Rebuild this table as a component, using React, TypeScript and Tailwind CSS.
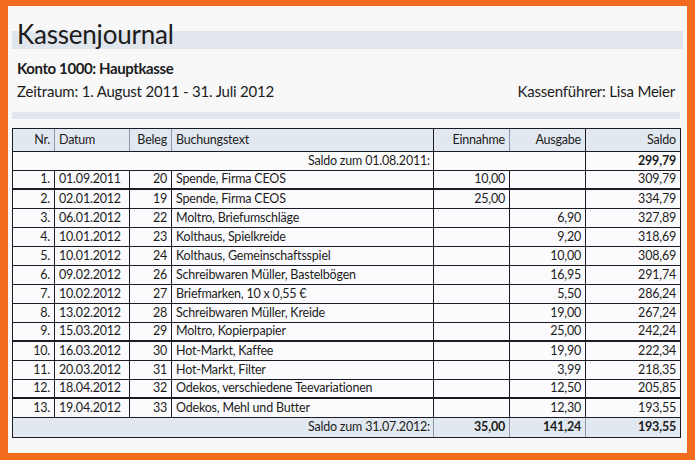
import React from 'react';

type Row = {
    nr: string;
    datum: string;
    beleg: string;
    text: string;
    ein: string;
    aus: string;
    saldo: string;
    thick?: boolean;
};

const rows: Row[] = [
    { nr: '1.', datum: '01.09.2011', beleg: '20', text: 'Spende, Firma CEOS', ein: '10,00', aus: '', saldo: '309,79', thick: true },
    { nr: '2.', datum: '02.01.2012', beleg: '19', text: 'Spende, Firma CEOS', ein: '25,00', aus: '', saldo: '334,79' },
    { nr: '3.', datum: '06.01.2012', beleg: '22', text: 'Moltro, Briefumschläge', ein: '', aus: '6,90', saldo: '327,89' },
    { nr: '4.', datum: '10.01.2012', beleg: '23', text: 'Kolthaus, Spielkreide', ein: '', aus: '9,20', saldo: '318,69' },
    { nr: '5.', datum: '10.01.2012', beleg: '24', text: 'Kolthaus, Gemeinschaftsspiel', ein: '', aus: '10,00', saldo: '308,69' },
    { nr: '6.', datum: '09.02.2012', beleg: '26', text: 'Schreibwaren Müller, Bastelbögen', ein: '', aus: '16,95', saldo: '291,74' },
    { nr: '7.', datum: '10.02.2012', beleg: '27', text: 'Briefmarken, 10 x 0,55 €', ein: '', aus: '5,50', saldo: '286,24' },
    { nr: '8.', datum: '13.02.2012', beleg: '28', text: 'Schreibwaren Müller, Kreide', ein: '', aus: '19,00', saldo: '267,24' },
    { nr: '9.', datum: '15.03.2012', beleg: '29', text: 'Moltro, Kopierpapier', ein: '', aus: '25,00', saldo: '242,24', thick: true },
    { nr: '10.', datum: '16.03.2012', beleg: '30', text: 'Hot-Markt, Kaffee', ein: '', aus: '19,90', saldo: '222,34' },
    { nr: '11.', datum: '20.03.2012', beleg: '31', text: 'Hot-Markt, Filter', ein: '', aus: '3,99', saldo: '218,35' },
    { nr: '12.', datum: '18.04.2012', beleg: '32', text: 'Odekos, verschiedene Teevariationen', ein: '', aus: '12,50', saldo: '205,85', thick: true },
    { nr: '13.', datum: '19.04.2012', beleg: '33', text: 'Odekos, Mehl und Butter', ein: '', aus: '12,30', saldo: '193,55' },
];

const line = 'border-[#1b1b26]';

export default function App() {
    return (
        <div className="w-[695px] h-[460px] bg-[#f26b1f] pt-[6px] pl-[8px] pr-[8px] pb-[7px] font-['Lato','Open_Sans',sans-serif] text-[#1c1c1c]">
            <div className="h-full bg-[#f8f8f8] px-[4px] pt-[12px]">
                {/* title with grey band behind it */}
                <div className="w-[671px] h-[32px] pl-[5px] text-[26px] leading-[32px] tracking-[-0.2px] bg-[linear-gradient(to_bottom,transparent_13px,#e1e6ec_13px,#e1e6ec_31px,transparent_31px)]">
                    Kassenjournal
                </div>

                <div className="mt-[8px] pl-[5px] pr-[5px] w-[668px]">
                    <div className="text-[15px] leading-[20px] font-bold tracking-[-0.4px]">Konto 1000: Hauptkasse</div>
                    <div className="mt-[3px] flex justify-between text-[15px] leading-[20px] tracking-[-0.2px]">
                        <span>Zeitraum: 1. August 2011 - 31. Juli 2012</span>
                        <span>Kassenführer: Lisa Meier</span>
                    </div>
                </div>

                <div className="mt-[11px] w-[668px] h-[7px] bg-[#e1e6ec]" />

                {/* table */}
                <div className={`mt-[9px] w-[669px] border ${line} text-[12.5px] tracking-[-0.2px]`}>
                    <div className={`flex h-[23px] bg-[#e2e8ef] border-b ${line}`}>
                        <div className="w-[42px] border-r border-[#8e9aab] flex items-center justify-end pr-[4px]">Nr.</div>
                        <div className="w-[75px] border-r border-[#8e9aab] flex items-center pl-[4px]">Datum</div>
                        <div className="w-[42px] border-r border-[#8e9aab] flex items-center justify-end pr-[4px]">Beleg</div>
                        <div className={`w-[262px] border-r ${line} flex items-center pl-[4px]`}>Buchungstext</div>
                        <div className="w-[76px] border-r border-[#8e9aab] flex items-center justify-end pr-[4px]">Einnahme</div>
                        <div className={`w-[76px] border-r ${line} flex items-center justify-end pr-[4px]`}>Ausgabe</div>
                        <div className="w-[94px] flex items-center justify-end pr-[4px]">Saldo</div>
                    </div>

                    <div className={`flex h-[19px] bg-[#fcfcfd] border-b ${line}`}>
                        <div className={`w-[421px] border-r ${line} flex items-center justify-end pr-[3px]`}>Saldo zum 01.08.2011:</div>
                        <div className={`w-[152px] border-r ${line}`} />
                        <div className="w-[94px] flex items-center justify-end pr-[4px] font-bold">299,79</div>
                    </div>

                    {rows.map((r) => (
                        <div key={r.nr} className={`flex h-[19px] bg-[#fbfbfd] ${line} ${r.thick ? 'border-b-2' : 'border-b'}`}>
                            <div className={`w-[42px] border-r ${line} flex items-center justify-end pr-[4px]`}>{r.nr}</div>
                            <div className={`w-[75px] border-r ${line} flex items-center pl-[4px]`}>{r.datum}</div>
                            <div className={`w-[42px] border-r ${line} flex items-center justify-end pr-[4px]`}>{r.beleg}</div>
                            <div className={`w-[262px] border-r ${line} flex items-center pl-[4px]`}>{r.text}</div>
                            <div className={`w-[76px] border-r ${line} flex items-center justify-end pr-[4px]`}>{r.ein}</div>
                            <div className={`w-[76px] border-r ${line} flex items-center justify-end pr-[4px]`}>{r.aus}</div>
                            <div className="w-[94px] flex items-center justify-end pr-[4px]">{r.saldo}</div>
                        </div>
                    ))}

                    <div className="flex h-[19px] bg-[#e2e8ef]">
                        <div className="w-[421px] border-r border-[#8e9aab] flex items-center justify-end pr-[3px]">Saldo zum 31.07.2012:</div>
                        <div className="w-[76px] border-r border-[#8e9aab] flex items-center justify-end pr-[4px] font-bold">35,00</div>
                        <div className="w-[76px] border-r border-[#8e9aab] flex items-center justify-end pr-[4px] font-bold">141,24</div>
                        <div className="w-[94px] flex items-center justify-end pr-[4px] font-bold">193,55</div>
                    </div>
                </div>
            </div>
        </div>
    );
}
